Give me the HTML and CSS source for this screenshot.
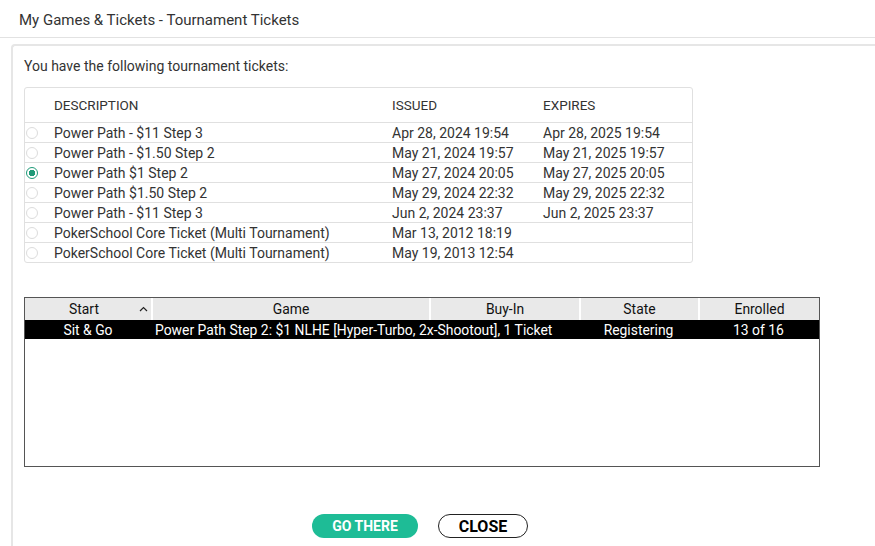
FILE: index.html
```html
<!DOCTYPE html>
<html lang="en">
  <head>
    <meta charset="UTF-8" />
    <title>My Games &amp; Tickets - Tournament Tickets</title>
    <link rel="stylesheet" href="styles.css">
  </head>
  <body>
    <header class="titlebar">My Games &amp; Tickets - Tournament Tickets</header>
    <main class="panel">
      <p class="intro">You have the following tournament tickets:</p>
      <div class="tickets">
        <div class="tickets-head">
          <span></span>
          <span>DESCRIPTION</span>
          <span>ISSUED</span>
          <span>EXPIRES</span>
        </div>
        <div class="ticket">
          <span class="radio"></span>
          <span>Power Path - $11 Step 3</span>
          <span>Apr 28, 2024 19:54</span>
          <span>Apr 28, 2025 19:54</span>
        </div>
        <div class="ticket">
          <span class="radio"></span>
          <span>Power Path - $1.50 Step 2</span>
          <span>May 21, 2024 19:57</span>
          <span>May 21, 2025 19:57</span>
        </div>
        <div class="ticket">
          <span class="radio checked"></span>
          <span>Power Path $1 Step 2</span>
          <span>May 27, 2024 20:05</span>
          <span>May 27, 2025 20:05</span>
        </div>
        <div class="ticket">
          <span class="radio"></span>
          <span>Power Path $1.50 Step 2</span>
          <span>May 29, 2024 22:32</span>
          <span>May 29, 2025 22:32</span>
        </div>
        <div class="ticket">
          <span class="radio"></span>
          <span>Power Path - $11 Step 3</span>
          <span>Jun 2, 2024 23:37</span>
          <span>Jun 2, 2025 23:37</span>
        </div>
        <div class="ticket">
          <span class="radio"></span>
          <span>PokerSchool Core Ticket (Multi Tournament)</span>
          <span>Mar 13, 2012 18:19</span>
          <span></span>
        </div>
        <div class="ticket">
          <span class="radio"></span>
          <span>PokerSchool Core Ticket (Multi Tournament)</span>
          <span>May 19, 2013 12:54</span>
          <span></span>
        </div>
      </div>

      <div class="games">
        <div class="games-head">
          <span class="sorted">Start
            <svg class="caret" width="9" height="6" viewBox="0 0 9 6"><path d="M1 5 L4.5 1.5 L8 5" fill="none" stroke="#222" stroke-width="1.2"/></svg>
          </span>
          <span>Game</span>
          <span>Buy-In</span>
          <span>State</span>
          <span>Enrolled</span>
        </div>
        <div class="game selected">
          <span>Sit &amp; Go</span>
          <span class="game-name">Power Path Step 2: $1 NLHE [Hyper-Turbo, 2x-Shootout], 1 Ticket</span>
          <span></span>
          <span>Registering</span>
          <span>13 of 16</span>
        </div>
      </div>

      <div class="actions">
        <button class="btn btn-go">GO THERE</button>
        <button class="btn btn-close">CLOSE</button>
      </div>
    </main>
  </body>
</html>
```

FILE: styles.css
```css
html,
body {
  height: 100%;
  margin: 0;
}
body {
  font-family: Roboto, "Liberation Sans", sans-serif;
  font-size: 14px;
  color: #333;
  background: #fff;
  overflow: hidden;
}
.titlebar {
  height: 37px;
  line-height: 41px;
  padding-left: 19px;
  font-size: 15px;
  color: #333;
  border-bottom: 1px solid #e2e2e2;
}
.panel {
  box-sizing: border-box;
  height: calc(100% - 44px);
  margin: 6px 0 0 11px;
  padding: 12px 0 0 11px;
  border-top: 2px solid #e6e6e6;
  border-left: 2px solid #e6e6e6;
  border-top-left-radius: 4px;
}
.intro {
  margin: 0 0 13px 0;
  line-height: 16px;
}

/* ticket list */
.tickets {
  width: 667px;
  border: 1px solid #e0e0e0;
  border-radius: 3px;
}
.tickets-head,
.ticket {
  display: grid;
  grid-template-columns: 29px 338px 151px 1fr;
  align-items: center;
}
.tickets-head {
  height: 34px;
  font-size: 13.5px;
  color: #333;
}
.ticket {
  height: 19px;
  border-top: 1px solid #e0e0e0;
  white-space: nowrap;
}
.radio {
  box-sizing: border-box;
  width: 12px;
  height: 12px;
  border: 1px solid #dcdcdc;
  border-radius: 50%;
  margin-left: 1px;
}
.radio.checked {
  border-color: #1f9a78;
  background: radial-gradient(circle, #1f9a78 0 3px, #fff 3.5px);
}

/* game list */
.games {
  box-sizing: border-box;
  width: 796px;
  height: 170px;
  margin-top: 34px;
  border: 1px solid #555;
  color: #111;
  font-size: 13.9px;
}
.games-head,
.game {
  display: grid;
  grid-template-columns: 126px 278px 150px 119px 1fr;
  text-align: center;
  white-space: nowrap;
}
.games-head {
  height: 22px;
  line-height: 22px;
  background: #e9e9e9;
}
.games-head span + span {
  border-left: 2px solid #fff;
}
.sorted {
  position: relative;
  padding-right: 8px;
}
.caret {
  position: absolute;
  right: 3px;
  top: 8px;
}
.game {
  height: 19px;
  line-height: 20px;
}
.game.selected {
  background: #000;
  color: #fff;
}
.game-name {
  text-align: left;
  padding-left: 4px;
  overflow: visible;
}

/* buttons */
.actions {
  width: 792px;
  display: flex;
  justify-content: center;
  gap: 20px;
  margin-top: 47px;
}
.btn {
  height: 24px;
  border-radius: 12px;
  font-family: Roboto, "Liberation Sans", sans-serif;
  font-weight: 700;
  cursor: pointer;
}
.btn-go {
  width: 106px;
  border: none;
  background: #1ebc96;
  color: #fff;
  font-size: 14px;
}
.btn-close {
  width: 90px;
  border: 1px solid #222;
  background: #fff;
  color: #000;
  font-size: 16px;
}
```
